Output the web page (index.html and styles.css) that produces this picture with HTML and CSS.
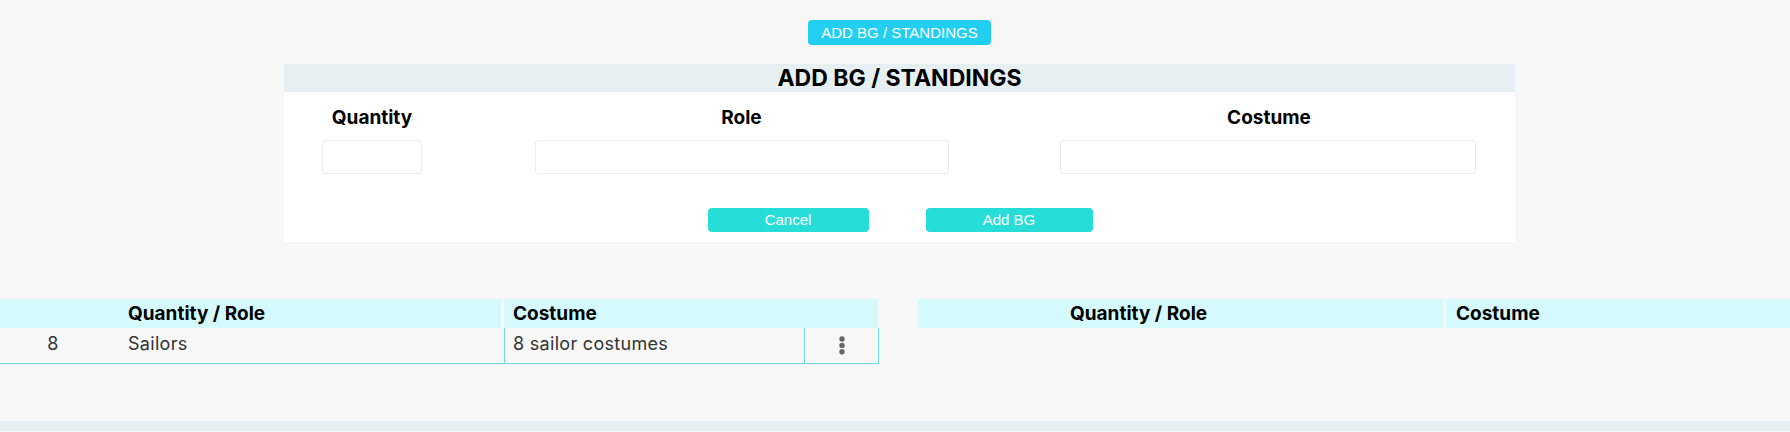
FILE: index.html
```html
<!DOCTYPE html>
<html lang="en">
<head>
<meta charset="utf-8">
<title>Add BG / Standings</title>
<link rel="stylesheet" href="styles.css">
</head>
<body>
<div class="page">
  <div class="top-bar">
    <button class="btn-top">ADD BG / STANDINGS</button>
  </div>

  <section class="panel">
    <h2 class="panel-title">ADD BG / STANDINGS</h2>
    <div class="form-grid">
      <div class="field field-qty">
        <label class="field-label">Quantity</label>
        <input class="input input-qty" type="text">
      </div>
      <div class="field field-role">
        <label class="field-label">Role</label>
        <input class="input input-role" type="text">
      </div>
      <div class="field field-costume">
        <label class="field-label">Costume</label>
        <input class="input input-costume" type="text">
      </div>
    </div>
    <div class="actions">
      <button class="btn-action btn-cancel">Cancel</button>
      <button class="btn-action btn-add">Add BG</button>
    </div>
  </section>

  <div class="tables">
    <div class="tbl tbl-left">
      <div class="thead-left">
        <div class="th th-qr-left">Quantity / Role</div>
        <div class="th th-costume">Costume</div>
      </div>
      <div class="trow">
        <div class="td td-qty">8</div>
        <div class="td td-role">Sailors</div>
        <div class="td td-costume">8 sailor costumes</div>
        <div class="td td-menu">
          <svg width="6" height="19" viewBox="0 0 6 19" aria-hidden="true">
            <circle cx="3" cy="3" r="2.7" fill="#666"/>
            <circle cx="3" cy="9.4" r="2.7" fill="#666"/>
            <circle cx="3" cy="15.8" r="2.7" fill="#666"/>
          </svg>
        </div>
      </div>
    </div>

    <div class="tbl tbl-right">
      <div class="thead-right">
        <div class="th th-qr-right">Quantity / Role</div>
        <div class="th th-costume-right">Costume</div>
      </div>
    </div>
  </div>

  <div class="bottom-band"></div>
</div>
</body>
</html>
```

FILE: styles.css
```css
* { box-sizing: border-box; }

html, body {
  margin: 0;
  padding: 0;
  background: #f7f7f7;
}

body {
  font-family: Inter, "DejaVu Sans", sans-serif;
  color: #111;
}

.page {
  min-height: 432px;
  display: flex;
  flex-direction: column;
  overflow: hidden;
}

.top-bar {
  display: flex;
  justify-content: center;
  padding-top: 20px;
  padding-left: 9px;
}

.btn-top {
  width: 183px;
  height: 25px;
  border: 0;
  border-radius: 4px;
  background: #22cff0;
  color: #fff;
  font-family: "Liberation Sans", Arial, sans-serif;
  font-size: 15px;
  line-height: 25px;
  padding: 0;
}

.panel {
  width: 1231px;
  margin: 19px 0 0 284px;
  background: #fff;
  padding-bottom: 10px;
}

.panel-title {
  margin: 0;
  height: 28px;
  background: #e6eff1;
  text-align: center;
  font-size: 23px;
  font-weight: 700;
  line-height: 28px;
  color: #000;
}

.form-grid {
  display: grid;
  grid-template-columns: 176px 563px 492px;
  padding-top: 15px;
}

.field {
  display: flex;
  flex-direction: column;
  align-items: center;
}

.field-label {
  font-size: 19px;
  font-weight: 700;
  line-height: 22px;
  color: #000;
}

.input {
  margin-top: 11px;
  height: 34px;
  border: 1px solid #ececf4;
  border-radius: 3px;
  background: #fff;
}

.input-qty { width: 100px; }
.input-role { width: 414px; margin-left: 1px; }
.input-costume { width: 416px; margin-left: -2px; }

.actions {
  display: flex;
  justify-content: center;
  gap: 57px;
  margin-top: 34px;
  padding-left: 1px;
}

.btn-action {
  height: 24px;
  border: 0;
  border-radius: 4px;
  background: #27ddd8;
  color: #fff;
  font-family: "Liberation Sans", Arial, sans-serif;
  font-size: 15px;
  line-height: 24px;
  padding: 0;
}

.btn-cancel { width: 161px; }
.btn-add { width: 167px; }

.tables {
  display: flex;
  gap: 39px;
  margin-top: 57px;
}

.tbl-left { width: 879px; }
.tbl-right { width: 872px; }

.th {
  height: 29px;
  background: #d4fafd;
  font-size: 19px;
  font-weight: 700;
  line-height: 29px;
  color: #000;
  white-space: nowrap;
}

.thead-left {
  display: grid;
  grid-template-columns: 501px 374px;
  column-gap: 3px;
  width: 878px;
}

.th-qr-left { padding-left: 128px; }
.th-costume { padding-left: 9px; }

.thead-right {
  display: grid;
  grid-template-columns: 525px 344px;
  column-gap: 3px;
}

.th-qr-right { padding-left: 152px; }
.th-costume-right { padding-left: 10px; }

.trow {
  display: grid;
  grid-template-columns: 106px 398px 300px 75px;
  height: 36px;
  border-bottom: 1px solid #7fd6df;
}

.td {
  font-size: 18px;
  letter-spacing: 0.3px;
  line-height: 21px;
  color: #333;
  padding-top: 5px;
}

.td-qty { text-align: center; }
.td-role { padding-left: 22px; }

.td-costume {
  border-left: 1px solid #6fdde0;
  padding-left: 8px;
}

.td-menu {
  border-left: 1px solid #6fdde0;
  border-right: 1px solid #6fdde0;
  padding-top: 0;
  display: flex;
  align-items: center;
  justify-content: center;
}

.bottom-band {
  margin-top: auto;
  height: 11px;
  background: #e6eff1;
  border-bottom: 1px solid #f1f5f6;
}
```
